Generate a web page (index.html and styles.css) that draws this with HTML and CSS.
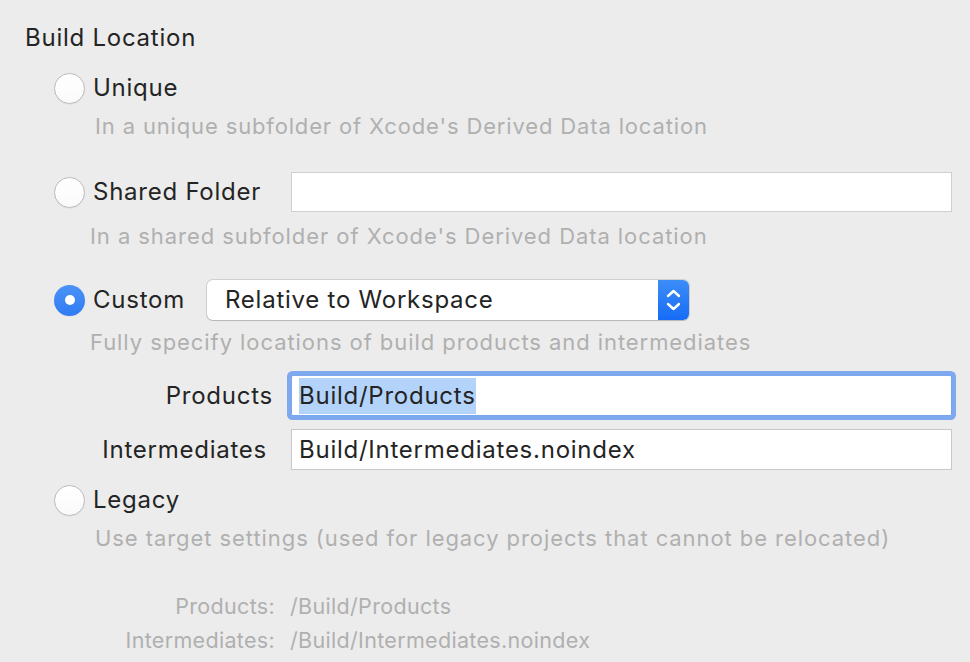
FILE: index.html
```html
<!DOCTYPE html>
<html>
<head>
<meta charset="utf-8">
<link rel="stylesheet" href="styles.css">
</head>
<body>
<div class="panel">
  <div class="title">Build Location</div>

  <div class="row row-unique">
    <span class="radio"></span>
    <span class="label">Unique</span>
  </div>
  <div class="desc desc-wide desc-unique">In a unique subfolder of Xcode's Derived Data location</div>

  <div class="row row-shared">
    <span class="radio"></span>
    <span class="label label-shared">Shared Folder</span>
    <div class="field field-shared"></div>
  </div>
  <div class="desc desc-shared">In a shared subfolder of Xcode's Derived Data location</div>

  <div class="row row-custom">
    <span class="radio radio-on"></span>
    <span class="label label-custom">Custom</span>
    <div class="popup">
      <span class="popup-text">Relative to Workspace</span>
      <span class="popup-arrows">
        <svg width="31" height="40" viewBox="0 0 31 40">
          <path d="M10 16 L15.5 11 L21 16" fill="none" stroke="#fff" stroke-width="2.4" stroke-linecap="round" stroke-linejoin="round"/>
          <path d="M10 24 L15.5 29 L21 24" fill="none" stroke="#fff" stroke-width="2.4" stroke-linecap="round" stroke-linejoin="round"/>
        </svg>
      </span>
    </div>
  </div>
  <div class="desc desc-custom">Fully specify locations of build products and intermediates</div>

  <div class="form-row form-products">
    <span class="form-label label-products">Products</span>
    <div class="field field-focus"><span class="selected">Build/Products</span></div>
  </div>
  <div class="form-row form-inter">
    <span class="form-label label-inter">Intermediates</span>
    <div class="field">Build/Intermediates.noindex</div>
  </div>

  <div class="row row-legacy">
    <span class="radio"></span>
    <span class="label">Legacy</span>
  </div>
  <div class="desc desc-wide desc-legacy">Use target settings (used for legacy projects that cannot be relocated)</div>

  <div class="paths">
    <div class="path-row"><span class="path-key">Products:</span><span class="path-val">/Build/Products</span></div>
    <div class="path-row"><span class="path-key">Intermediates:</span><span class="path-val">/Build/Intermediates.noindex</span></div>
  </div>
</div>
</body>
</html>
```

FILE: styles.css
```css
html, body {
  margin: 0;
  padding: 0;
  background: #ececec;
}
body {
  width: 970px;
  height: 662px;
  overflow: hidden;
  font-family: "Inter", "Noto Sans", sans-serif;
  color: #242424;
  letter-spacing: 0.75px;
}
.panel {
  padding-top: 23px;
}
.title {
  font-size: 24px;
  line-height: 30px;
  height: 30px;
  padding-left: 25px;
}
.row {
  display: flex;
  align-items: center;
  height: 40px;
  padding-left: 54px;
}
.row-unique { margin-top: 15px; }
.row-shared { margin-top: 31px; }
.row-custom { margin-top: 29px; }
.row-legacy { margin-top: 10px; }

.radio {
  box-sizing: border-box;
  width: 31px;
  height: 31px;
  border-radius: 50%;
  background: linear-gradient(#ffffff, #fafafa);
  border: 1px solid #bcbcbc;
  box-shadow: 0 0.5px 1px rgba(0,0,0,0.08);
  flex: none;
  position: relative;
}
.radio-on {
  border: none;
  background: linear-gradient(#4b92f7, #2f7bf3);
}
.radio-on::after {
  content: "";
  position: absolute;
  left: 10.5px;
  top: 10.5px;
  width: 10px;
  height: 10px;
  border-radius: 50%;
  background: #fff;
}
.label {
  font-size: 24px;
  line-height: 30px;
  margin-left: 8px;
}
.label-shared { width: 198px; }
.label-custom { width: 114px; }

.desc {
  font-size: 22px;
  line-height: 30px;
  height: 30px;
  color: #b0b0b0;
  letter-spacing: 0.93px;
  padding-left: 90px;
  white-space: nowrap;
}
.desc-wide { padding-left: 95px; }
.desc-unique { margin-top: 3px; letter-spacing: 0.85px; }
.desc-shared { margin-top: 9px; }
.desc-custom { margin-top: 7px; }
.desc-legacy { margin-top: 3px; }

.field {
  box-sizing: border-box;
  width: 661px;
  height: 41px;
  background: #fff;
  border: 1px solid #c8c8c8;
  font-size: 24px;
  line-height: 39px;
  padding-left: 7px;
  flex: none;
}
.field-shared {
  height: 40px;
  border-color: #d0d0d0;
}
.field-focus {
  border-color: #7aa6ee;
  box-shadow: 0 0 0 4px #7ea9ef;
  border-radius: 2px;
}
.selected {
  background: #b3d3fb;
  padding: 3px 0 4px;
}

.popup {
  box-sizing: border-box;
  width: 482px;
  height: 40px;
  display: flex;
  background: #fff;
  border-radius: 6px;
  box-shadow: 0 0 0 1px rgba(0,0,0,0.12), 0 1px 1px rgba(0,0,0,0.12);
  overflow: hidden;
  flex: none;
}
.popup-text {
  flex: 1;
  font-size: 24px;
  line-height: 40px;
  padding-left: 18px;
}
.popup-arrows {
  width: 31px;
  height: 40px;
  background: linear-gradient(#3d8df7, #166cf6);
  display: block;
}
.popup-arrows svg { display: block; }

.form-row {
  display: flex;
  align-items: center;
  height: 41px;
}
.form-products { margin-top: 18px; }
.form-inter { margin-top: 13px; }
.form-label {
  font-size: 24px;
  text-align: right;
  box-sizing: border-box;
}
.label-products { width: 291px; padding-right: 18px; }
.label-inter { width: 291px; padding-right: 24px; }

.paths {
  margin-top: 36px;
  font-size: 21.5px;
  letter-spacing: 0.32px;
  color: #b0b0b0;
}
.path-row {
  display: flex;
  height: 34px;
  line-height: 34px;
}
.path-key {
  width: 275px;
  text-align: right;
}
.path-val {
  margin-left: 15px;
}
```
